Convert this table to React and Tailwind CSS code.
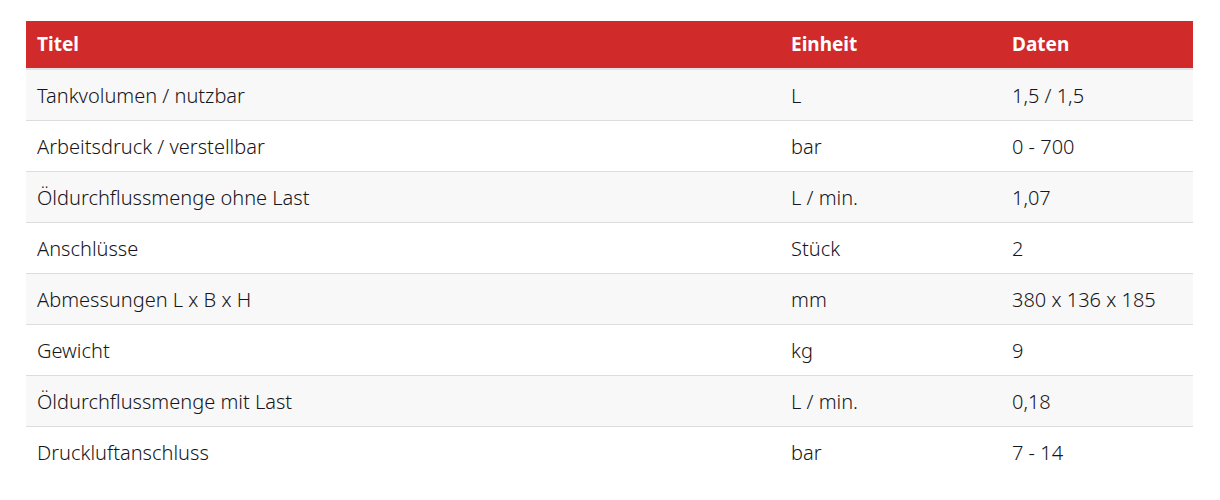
const rows = [
  ["Tankvolumen / nutzbar", "L", "1,5 / 1,5"],
  ["Arbeitsdruck / verstellbar", "bar", "0 - 700"],
  ["Öldurchflussmenge ohne Last", "L / min.", "1,07"],
  ["Anschlüsse", "Stück", "2"],
  ["Abmessungen L x B x H", "mm", "380 x 136 x 185"],
  ["Gewicht", "kg", "9"],
  ["Öldurchflussmenge mit Last", "L / min.", "0,18"],
  ["Druckluftanschluss", "bar", "7 - 14"],
];

const cols = "grid grid-cols-[754px_221px_1fr]";

const App = () => {
  return (
    <div className="min-h-[500px] bg-white px-[26px] pt-[21px] font-['Noto_Sans',sans-serif] text-[#151520]">
      <div className="w-[1167px]">
        <div
          className={`${cols} h-[49px] items-center border-b-2 border-[#e2e2e2] bg-[#d12a2a] text-[19px] font-bold text-white`}
        >
          <div className="px-[11px]">Titel</div>
          <div className="px-[11px]">Einheit</div>
          <div className="px-[11px]">Daten</div>
        </div>
        {rows.map((row, index) => (
          <div
            key={row[0]}
            className={`${cols} h-[51px] items-center pt-[1px] text-[20px] font-light ${
              index % 2 === 0 ? "bg-[#f8f8f8]" : "bg-white"
            } ${index < rows.length - 1 ? "border-b border-[#dddddd]" : ""}`}
          >
            {row.map((cell, i) => (
              <div key={i} className="px-[11px]">
                {cell}
              </div>
            ))}
          </div>
        ))}
      </div>
    </div>
  );
};

export default App;
